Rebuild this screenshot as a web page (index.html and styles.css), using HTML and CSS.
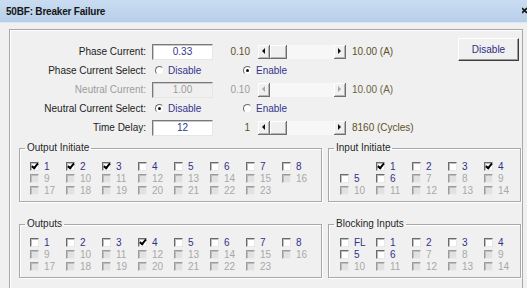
FILE: index.html
```html
<!DOCTYPE html>
<html lang="en">
<head>
  <meta charset="UTF-8" />
  <title>50BF: Breaker Failure</title>
  <link rel="stylesheet" href="styles.css">
</head>
<body>
  <div class="titlebar">
    <span>50BF: Breaker Failure</span>
    <svg class="close" width="6" height="10" viewBox="0 0 6 10"><path d="M0 2 L5 7 M5 2 L0 7" stroke="#111" stroke-width="1.6" fill="none"/></svg>
  </div>

  <div class="frame">
    <div class="top">
      <div class="settings">
        <div class="row">
          <span class="lbl">Phase Current:</span>
          <span class="field">0.33</span>
          <span class="num min">0.10</span>
          <span class="scroll"><b class="arrow left"></b><b class="thumb"></b><i class="track"></i><b class="arrow right"></b></span>
          <span class="num max">10.00 (A)</span>
        </div>
        <div class="row">
          <span class="lbl">Phase Current Select:</span>
          <label class="opt first"><i class="rd"></i>Disable</label>
          <label class="opt"><i class="rd on"></i>Enable</label>
        </div>
        <div class="row off">
          <span class="lbl">Neutral Current:</span>
          <span class="field">1.00</span>
          <span class="num min">0.10</span>
          <span class="scroll"><b class="arrow left"></b><i class="track"></i><b class="arrow right"></b></span>
          <span class="num max">10.00 (A)</span>
        </div>
        <div class="row">
          <span class="lbl">Neutral Current Select:</span>
          <label class="opt first"><i class="rd on"></i>Disable</label>
          <label class="opt"><i class="rd"></i>Enable</label>
        </div>
        <div class="row">
          <span class="lbl">Time Delay:</span>
          <span class="field">12</span>
          <span class="num min">1</span>
          <span class="scroll"><b class="arrow left"></b><b class="thumb"></b><i class="track"></i><b class="arrow right"></b></span>
          <span class="num max">8160 (Cycles)</span>
        </div>
      </div>
      <button class="btn">Disable</button>
    </div>

    <div class="groups">
      <fieldset class="group">
        <legend>Output Initiate</legend>
        <div class="checks eight" id="outInit"></div>
      </fieldset>
      <fieldset class="group">
        <legend>Input Initiate</legend>
        <div class="checks five" id="inInit"></div>
      </fieldset>
      <fieldset class="group">
        <legend>Outputs</legend>
        <div class="checks eight" id="outputs"></div>
      </fieldset>
      <fieldset class="group">
        <legend>Blocking Inputs</legend>
        <div class="checks five" id="blocking"></div>
      </fieldset>
    </div>
  </div>

  <script>
    // [label, enabled, checked]; null = empty cell
    const lists = {
      outInit: [],
      inInit: [],
      outputs: [],
      blocking: []
    };

    for (let i = 1; i <= 23; i++) {
      lists.outInit.push([i, i <= 8, i <= 3]);
      lists.outputs.push([i, i <= 8, i === 4]);
    }

    lists.inInit.push(null);
    for (let i = 1; i <= 14; i++) lists.inInit.push([i, i <= 6, i === 1 || i === 4]);

    lists.blocking.push(['FL', true, false]);
    for (let i = 1; i <= 14; i++) lists.blocking.push([i, i <= 6, false]);

    Object.keys(lists).forEach(id => {
      const box = document.getElementById(id);
      lists[id].forEach(item => {
        const cell = document.createElement('label');
        if (!item) {
          cell.className = 'chk';
        } else {
          const [name, enabled, checked] = item;
          cell.className = 'chk' + (enabled ? '' : ' off');
          cell.innerHTML = `<i class="cb${checked ? ' on' : ''}"></i>${name}`;
        }
        box.appendChild(cell);
      });
    });
  </script>
</body>
</html>
```

FILE: styles.css
```css
body {
  margin: 0;
  width: 527px;
  height: 288px;
  overflow: hidden;
  background: #f0f0f0;
  font-family: "Liberation Sans", Arial, sans-serif;
  font-size: 10px;
  color: #1c1c1c;
}

.titlebar {
  height: 22px;
  display: flex;
  align-items: center;
  justify-content: space-between;
  padding-left: 6px;
  background: linear-gradient(#c9dcf1, #b8cfe9);
  border-bottom: 1px solid #dbe6f3;
  color: #151515;
  font-size: 10px;
  font-weight: bold;
  letter-spacing: -0.2px;
}
.close {
  margin-right: -1px;
}

.frame {
  box-sizing: border-box;
  margin: 6px 4px 0 9px;
  height: 259px;
  overflow: hidden;
  border-top: 1px solid #a9a9a9;
  border-left: 1px solid #a9a9a9;
  border-right: 1px solid #a9a9a9;
  box-shadow: inset 1px 1px #fff;
}

.top {
  display: flex;
  align-items: flex-start;
}
.settings {
  padding-top: 12px;
}
.row {
  display: flex;
  align-items: center;
  height: 19px;
}
.lbl {
  width: 136px;
  padding-right: 1px;
  text-align: right;
}
.field {
  box-sizing: border-box;
  margin-left: 5px;
  width: 61px;
  height: 16px;
  line-height: 14px;
  text-align: center;
  background: #fff;
  color: #34348c;
  border: 1px solid;
  border-color: #7a7a7a #e6e6e6 #e6e6e6 #7a7a7a;
  box-shadow: inset 1px 1px #c8c8c8;
}
.num {
  color: #5d5027;
}
.min {
  width: 37px;
  text-align: right;
}
.max {
  margin-left: 6px;
}

.scroll {
  display: flex;
  margin-left: 8px;
  width: 88px;
  height: 14px;
  background: #f7f7f7;
}
.track {
  flex: 1;
}
.arrow, .thumb {
  box-sizing: border-box;
  position: relative;
  width: 12px;
  background: #f0f0f0;
  border-right: 1px solid #6f6f6f;
  border-bottom: 1px solid #6f6f6f;
  box-shadow: inset 1px 1px #fff, inset -1px -1px #b5b5b5;
}
.thumb {
  width: 17px;
}
.arrow::after {
  content: "";
  position: absolute;
  top: 3px;
  left: 3px;
  border: 3px solid transparent;
}
.arrow.left::after {
  left: 1px;
  border-right-color: #111;
}
.arrow.right::after {
  left: 4px;
  border-left-color: #111;
}

.opt {
  display: flex;
  align-items: center;
  color: #34348c;
}
.opt.first {
  margin-left: 8px;
  width: 88px;
}
.rd {
  box-sizing: border-box;
  position: relative;
  width: 9px;
  height: 9px;
  margin-right: 4px;
  border-radius: 50%;
  background: #fff;
  border: 1px solid;
  border-color: #6a6a6a #ececec #ececec #6a6a6a;
}
.rd.on::after {
  content: "";
  position: absolute;
  left: 2px;
  top: 2px;
  width: 3px;
  height: 3px;
  border-radius: 50%;
  background: #111;
}

.row.off .lbl,
.row.off .field {
  color: #9c9c9c;
}
.row.off .field {
  background: #f0f0f0;
}
.row.off .min {
  color: #9c9c9c;
}
.row.off .max {
  color: #6e6445;
}
.row.off .arrow.left::after {
  border-right-color: #a8a8a8;
}
.row.off .arrow.right::after {
  border-left-color: #a8a8a8;
}

.btn {
  margin: 8px 3px 0 auto;
  width: 61px;
  height: 23px;
  padding: 0;
  font-family: "Liberation Sans", Arial, sans-serif;
  font-size: 10px;
  color: #2e2e80;
  background: #f0f0f0;
  border: 1px solid;
  border-color: #fff #3c3c3c #3c3c3c #fff;
  box-shadow: inset -1px -1px #9a9a9a;
}

.groups {
  display: grid;
  grid-template-columns: 303px 190px;
  column-gap: 6px;
  row-gap: 16px;
  margin: 5px 0 0 9px;
}
.group {
  margin: 0;
  padding: 6px 0 5px;
  border: 1px solid #a9a9a9;
  box-shadow: inset 1px 1px #fff, 1px 1px #fff;
}
.group legend {
  margin-left: 5px;
  padding: 0 2px;
  line-height: 12px;
  color: #262626;
}

.checks {
  display: grid;
  grid-auto-rows: 12px;
}
.checks.eight {
  grid-template-columns: repeat(8, 36px);
  padding-left: 10px;
}
.checks.five {
  grid-template-columns: repeat(5, 36px);
  padding-left: 11px;
}
.chk {
  display: flex;
  align-items: center;
  color: #30308a;
}
.chk.off {
  color: #a8a8a8;
}
.cb {
  box-sizing: border-box;
  position: relative;
  width: 9px;
  height: 9px;
  margin-right: 5px;
  background: #fff;
  border: 1px solid;
  border-color: #6a6a6a #e8e8e8 #e8e8e8 #6a6a6a;
  box-shadow: inset 1px 1px #bdbdbd;
}
.chk.off .cb {
  background: #e2e2e2;
  border-color: #9c9c9c #ececec #ececec #9c9c9c;
}
.cb.on::after {
  content: "";
  position: absolute;
  left: 2px;
  top: -1px;
  width: 2px;
  height: 5px;
  border: solid #000;
  border-width: 0 2px 2px 0;
  transform: rotate(40deg);
}
```
